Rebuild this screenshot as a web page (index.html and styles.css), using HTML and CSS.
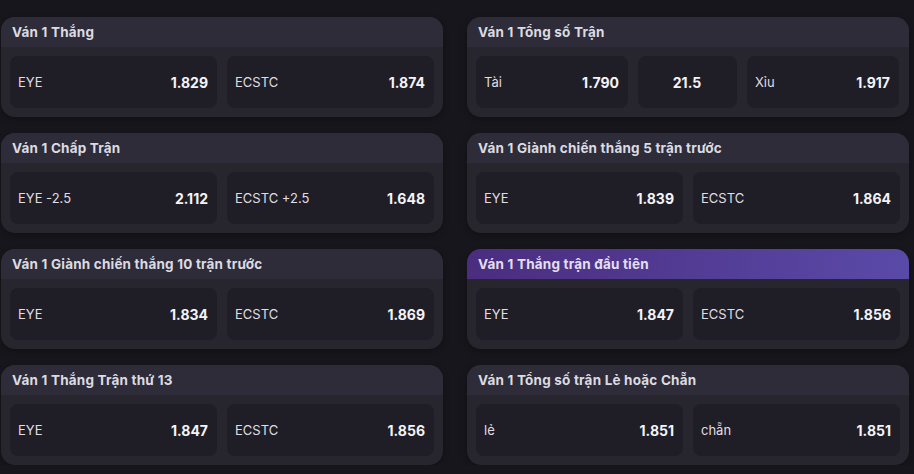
FILE: index.html
```html
<!DOCTYPE html>
<html lang="vi">
<head>
    <meta charset="UTF-8">
    <meta name="viewport" content="width=device-width, initial-scale=1.0">
    <title>Kèo Ván 1</title>
    <link rel="stylesheet" href="styles.css">
</head>
<body>
    <div class="market-grid">
        <!-- Row 1 -->
        <div class="market">
            <div class="market-title">Ván 1 Thắng</div>
            <div class="market-odds">
                <div class="odd"><span class="odd-name">EYE</span><span class="odd-value">1.829</span></div>
                <div class="odd"><span class="odd-name">ECSTC</span><span class="odd-value">1.874</span></div>
            </div>
        </div>
        <div class="market">
            <div class="market-title">Ván 1 Tổng số Trận</div>
            <div class="market-odds three">
                <div class="odd"><span class="odd-name">Tài</span><span class="odd-value">1.790</span></div>
                <div class="odd line"><span class="odd-value">21.5</span></div>
                <div class="odd"><span class="odd-name">Xỉu</span><span class="odd-value">1.917</span></div>
            </div>
        </div>

        <!-- Row 2 -->
        <div class="market">
            <div class="market-title">Ván 1 Chấp Trận</div>
            <div class="market-odds">
                <div class="odd"><span class="odd-name">EYE -2.5</span><span class="odd-value">2.112</span></div>
                <div class="odd"><span class="odd-name">ECSTC +2.5</span><span class="odd-value">1.648</span></div>
            </div>
        </div>
        <div class="market">
            <div class="market-title">Ván 1 Giành chiến thắng 5 trận trước</div>
            <div class="market-odds">
                <div class="odd"><span class="odd-name">EYE</span><span class="odd-value">1.839</span></div>
                <div class="odd"><span class="odd-name">ECSTC</span><span class="odd-value">1.864</span></div>
            </div>
        </div>

        <!-- Row 3 -->
        <div class="market">
            <div class="market-title">Ván 1 Giành chiến thắng 10 trận trước</div>
            <div class="market-odds">
                <div class="odd"><span class="odd-name">EYE</span><span class="odd-value">1.834</span></div>
                <div class="odd"><span class="odd-name">ECSTC</span><span class="odd-value">1.869</span></div>
            </div>
        </div>
        <div class="market active">
            <div class="market-title">Ván 1 Thắng trận đầu tiên</div>
            <div class="market-odds">
                <div class="odd"><span class="odd-name">EYE</span><span class="odd-value">1.847</span></div>
                <div class="odd"><span class="odd-name">ECSTC</span><span class="odd-value">1.856</span></div>
            </div>
        </div>

        <!-- Row 4 -->
        <div class="market">
            <div class="market-title">Ván 1 Thắng Trận thứ 13</div>
            <div class="market-odds">
                <div class="odd"><span class="odd-name">EYE</span><span class="odd-value">1.847</span></div>
                <div class="odd"><span class="odd-name">ECSTC</span><span class="odd-value">1.856</span></div>
            </div>
        </div>
        <div class="market">
            <div class="market-title">Ván 1 Tổng số trận Lẻ hoặc Chẵn</div>
            <div class="market-odds">
                <div class="odd"><span class="odd-name">lẻ</span><span class="odd-value">1.851</span></div>
                <div class="odd"><span class="odd-name">chẵn</span><span class="odd-value">1.851</span></div>
            </div>
        </div>
    </div>
</body>
</html>
```

FILE: styles.css
```css
* {
    margin: 0;
    padding: 0;
    box-sizing: border-box;
}

body {
    background: #17161c;
    color: #fff;
    font-family: Inter, "Open Sans", sans-serif;
    overflow: hidden;
}

/* Grid of markets */
.market-grid {
    display: grid;
    grid-template-columns: 442px 442px;
    gap: 16px 24px;
    padding: 17px 0 0 1px;
}

.market {
    height: 100px;
    background: #27262f;
    border-radius: 14px;
    overflow: hidden;
    box-shadow: 0 2px 6px rgba(0, 0, 0, 0.3);
    display: flex;
    flex-direction: column;
}

.market-title {
    height: 30px;
    padding: 0 11px;
    display: flex;
    align-items: center;
    background: #2d2c38;
    color: #dcdbe2;
    font-size: 13.5px;
    font-weight: 700;
    letter-spacing: 0.2px;
}

.market.active .market-title {
    background: linear-gradient(90deg, #4a2d7f, #5a4aa8);
    color: #e4dff0;
}

.market-odds {
    flex: 1;
    display: grid;
    grid-template-columns: 1fr 1fr;
    gap: 10px;
    padding: 9px;
}

.market-odds.three {
    grid-template-columns: 152px 99px 152px;
}

/* Odd box */
.odd {
    background: #1f1e26;
    border-radius: 8px;
    display: flex;
    align-items: center;
    justify-content: space-between;
    padding: 0 9px 0 8px;
}

.odd.line {
    justify-content: center;
}

.odd-name {
    font-size: 13px;
    color: #e2dde0;
}

.odd-value {
    font-size: 14px;
    font-weight: 700;
    color: #f4f3f8;
}
```
